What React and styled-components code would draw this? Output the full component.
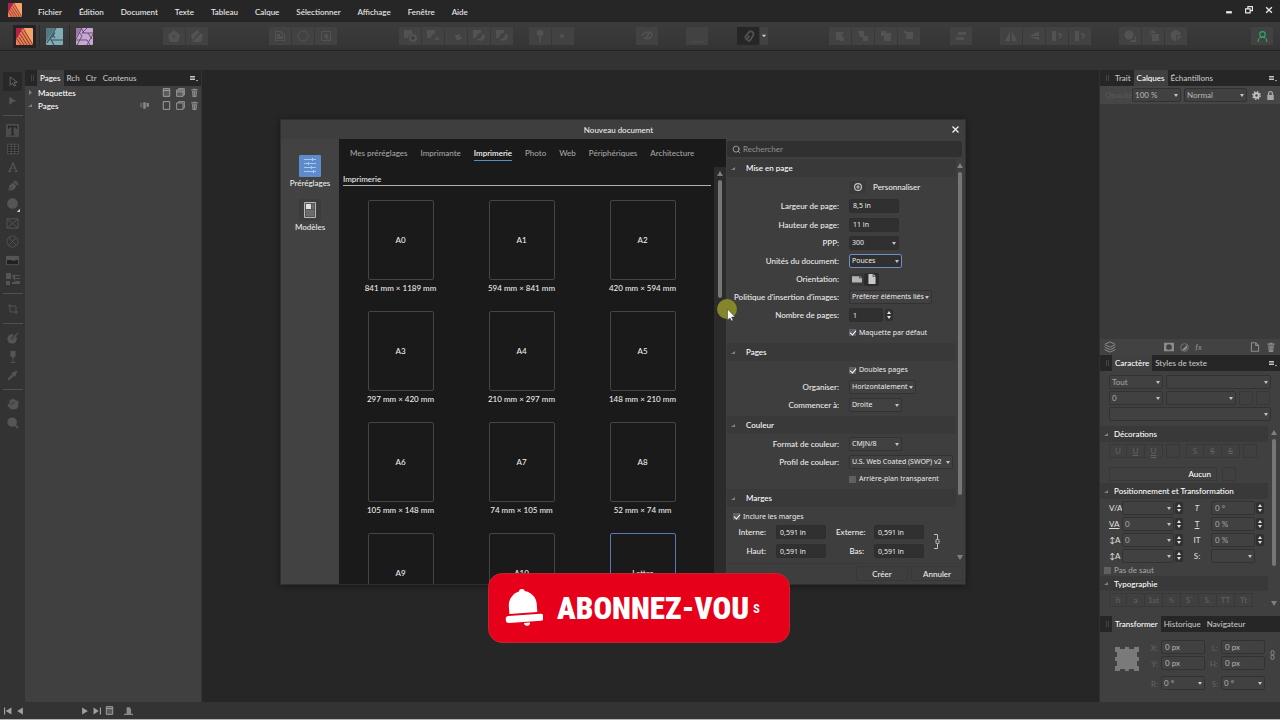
import React from 'react';
import styled, { createGlobalStyle, css } from 'styled-components';
import { Crop, Hand, Layers, Pipette, Search, UserRound } from 'lucide-react';

const GlobalStyle = createGlobalStyle`
  * {
    box-sizing: border-box;
  }

  body {
    margin: 0;
    background: #333333;
    color: #ececec;
    font-family: Lato, 'Open Sans', sans-serif;
    font-size: 8px;
    font-weight: 500;
    line-height: 12px;
    overflow: hidden;
  }

  button,
  input,
  select {
    margin: 0;
    padding: 0;
    border: 0;
    background: none;
    color: inherit;
    font: inherit;
  }

  a {
    color: inherit;
    text-decoration: none;
  }

  svg {
    display: block;
    flex-shrink: 0;
  }
`;

const Screen = styled.div`
  display: flex;
  flex-direction: column;
  min-height: 100vh;
  border-bottom: 1px solid #b4b4b4;
`;

const MenuBar = styled.header`
  display: flex;
  align-items: center;
  height: 22px;
  padding: 0 5px 2px 8px;
  background: #262626;
`;

const Menus = styled.nav`
  display: flex;
  flex: 1;
  gap: 17px;
  padding: 3px 0 0 16px;
`;

const WindowButtons = styled.div`
  display: flex;
  gap: 10px;

  button {
    width: 10px;
    height: 12px;
  }
`;

const Toolbar = styled.div`
  display: flex;
  align-items: center;
  height: 29px;
  padding: 0 7px 0 13px;
  background: linear-gradient(#3c3c3c, #343434);
  border-bottom: 1px solid #242424;
`;

const Persona = styled.button`
  display: flex;
  align-items: center;
  justify-content: center;
  width: 23px;
  height: 23px;
  background: ${props => (props.$active ? '#232323' : 'transparent')};
`;

const PersonaRule = styled.span`
  width: 1px;
  height: 22px;
  margin: 0 3px;
  background: #2a2a2a;
`;

const ToolGroup = styled.div`
  display: flex;
  gap: 1px;
  margin-left: ${props => props.$space};
`;

const ToolbarButton = styled.button`
  display: flex;
  align-items: center;
  justify-content: center;
  width: ${props => (props.$slim ? '8px' : '22px')};
  height: 18px;
  background: ${props => (props.$pressed ? '#262626' : '#424242')};
  color: ${props => props.$color || '#525252'};
`;

const ContextBar = styled.div`
  height: 19px;
`;

const Workspace = styled.div`
  display: flex;
  flex: 1;
`;

const ToolStrip = styled.div`
  display: flex;
  flex-direction: column;
  align-items: center;
  width: 25px;
  padding-top: 2px;
`;

const Tool = styled.button`
  display: flex;
  align-items: center;
  justify-content: center;
  width: 19px;
  height: ${props => (props.$short ? '18px' : '19px')};
  border-radius: 2px;
  background: ${props => (props.$active ? '#282828' : 'transparent')};
  color: #555555;
`;

const ToolRule = styled.hr`
  width: 20px;
  margin: 5px 0;
  border: 0;
  border-top: 1px solid #505050;
`;

const LeftDock = styled.aside`
  width: 177px;
  background: #404040;
  border-right: 1px solid #333333;
`;

const Canvas = styled.main`
  flex: 1;
  background: #262626;
`;

const RightDock = styled.aside`
  display: flex;
  flex-direction: column;
  width: 181px;
  border-left: 1px solid #303030;
  background: #404040;
`;

const TabBar = styled.div`
  display: flex;
  align-items: center;
  height: 16px;
  padding: 0 3px 0 6px;
  background: #262626;
`;

const Grip = styled.span`
  width: 3px;
  height: 6px;
  margin-right: 3px;
  border: solid #444444;
  border-width: 0 1px;
`;

const Tab = styled.button`
  height: 16px;
  padding: 0 ${props => (props.$tight ? '3px' : '4px')};
  background: ${props => (props.$active ? '#404040' : 'transparent')};
  color: ${props => (props.$active ? '#ffffff' : '#c4c4c4')};
`;

const PanelMenu = styled.button`
  display: flex;
  margin-left: auto;
`;

const TreeRow = styled.div`
  display: flex;
  align-items: center;
  gap: 5px;
  height: 13px;
  padding: 0 2px 0 3px;
  color: #ffffff;

  span {
    flex: 1;
  }
`;

const SpreadIcon = styled.i`
  margin-right: 8px;
  color: #858585;
`;

const Opacity = styled.div`
  display: flex;
  align-items: center;
  gap: 3px;
  height: 18px;
  padding: 0 5px;
  background: #464646;
  color: #b0b0b0;

  label {
    width: 24px;
    color: #595959;
  }

  svg:first-of-type {
    margin: 0 auto;
  }
`;

const LayerList = styled.div`
  flex: 1;
  background: #3a3a3a;
`;

const LayerActions = styled.div`
  display: flex;
  align-items: center;
  gap: 6px;
  height: 16px;
  padding: 0 4px;
  background: #424242;
  color: #8c8c8c;
`;

const Spacer = styled.span`
  flex: 1;
`;

const fieldSkin = css`
  border: 1px solid ${props => (props.$dark ? '#2e2e2e' : '#323232')};
  border-radius: 2px;
  background: ${props => (props.$dark ? '#303030' : '#414141')};
`;

const TextInput = styled.input`
  ${fieldSkin}
  width: ${props => props.$width || '100%'};
  height: 14px;
  padding: 0 3px;
`;

const SelectShell = styled.span`
  display: inline-flex;
  position: relative;
  width: ${props => props.$width || '100%'};

  select {
    ${fieldSkin}
    appearance: none;
    width: 100%;
    height: 14px;
    padding: 0 0 0 2px;
    outline: ${props => (props.$focus ? '1px solid #6c8fc4' : '0')};
    outline-offset: -1px;
  }

  &::after {
    content: '';
    position: absolute;
    top: 6px;
    right: 3px;
    border: 2px solid transparent;
    border-top: 3px solid #c4c4c4;
    pointer-events: none;
  }
`;

const Arrows = styled.button`
  width: 8px;
  height: 12px;
  background: #303030;
  border-radius: 2px;
`;

const Check = styled.label`
  display: flex;
  align-items: center;
  gap: 3px;

  input {
    appearance: none;
    position: relative;
    width: 7px;
    height: 7px;
    background: #606060;
  }

  input:checked::after {
    content: '';
    position: absolute;
    top: 0;
    left: 2px;
    width: 3px;
    height: 5px;
    border: solid #ffffff;
    border-width: 0 1px 1px 0;
    transform: rotate(40deg);
  }
`;

const CharacterPanel = styled.section`
  height: 245px;
  overflow: hidden;
  color: #a0a0a0;
`;

const FontRows = styled.div`
  display: flex;
  flex-direction: column;
  gap: 1px;
  padding: 3px 9px 5px;
`;

const FontRow = styled.div`
  display: flex;
  align-items: center;
  gap: 3px;
  height: 15px;
`;

const Split = styled.div`
  display: flex;
`;

const Grow = styled.div`
  flex: 1;
  min-width: 0;
`;

const Swatch = styled.button`
  width: 14px;
  height: 14px;
  flex-shrink: 0;
  border: 1px solid #383838;
`;

const Heading = styled.h2`
  display: flex;
  align-items: center;
  gap: ${props => props.$gap || '5px'};
  height: ${props => props.$height || '16px'};
  margin: 0;
  padding: 0 4px;
  background: #393939;
  color: #ffffff;
  font-size: 8px;
  font-weight: 500;
`;

const GlyphRow = styled.div`
  display: flex;
  align-items: center;
  gap: 3px;
  height: 18px;
  padding-left: 9px;
`;

const GlyphGroup = styled.div`
  display: flex;
  margin-right: ${props => (props.$apart ? '3px' : '0')};
`;

const Glyph = styled.button`
  width: 18px;
  height: 14px;
  border: 1px solid #383838;
  border-left-width: 0;
  color: #606060;
  text-decoration: ${props => props.$line || 'none'};

  &:first-child {
    border-left-width: 1px;
  }
`;

const DecorationRow = styled.div`
  display: flex;
  align-items: center;
  gap: 5px;
  height: 23px;
  padding: 5px 9px 0;
`;

const NoneButton = styled.button`
  width: 108px;
  height: 14px;
  padding-right: 5px;
  border: 1px solid #383838;
  color: #ffffff;
  text-align: right;
`;

const PositionRows = styled.div`
  padding: 1px 0 0 4px;
`;

const PositionRow = styled.div`
  display: grid;
  grid-template-columns: 12px 52px 8px 26px 44px 8px;
  align-items: center;
  column-gap: 1px;
  height: 16px;
  padding-left: 5px;
`;

const PositionLabel = styled.label`
  color: #dddddd;
  font-style: ${props => (props.$slanted ? 'italic' : 'normal')};
  text-align: ${props => (props.$centered ? 'center' : 'left')};
  text-decoration: ${props => (props.$underlined ? 'underline' : 'none')};
`;

const ScrollBar = styled.div`
  display: flex;
  flex-direction: column;
  align-items: center;
  width: ${props => props.$width || '12px'};
  padding: 4px 0 3px;
  gap: 4px;
  background: ${props => props.$track || 'transparent'};
`;

const Thumb = styled.div`
  flex: ${props => props.$size} 0 0;
  width: 4px;
  border-radius: 2px;
  background: #777777;
`;

const Rest = styled.div`
  flex: ${props => props.$size} 0 0;
`;

const TransformPanel = styled.section`
  display: flex;
  align-items: flex-start;
  height: 70px;
  padding: 8px 5px 0 15px;
  color: #aaaaaa;
`;

const TransformGrid = styled.div`
  display: grid;
  flex: 1;
  grid-template-columns: 19px 44px 10px 44px;
  grid-template-rows: 14px 14px 18px;
  gap: 2px 3px;
  align-items: end;

  label {
    color: #606060;
    text-align: right;
  }
`;

const StatusBar = styled.footer`
  display: flex;
  align-items: center;
  height: 17px;
  padding-left: 4px;
  gap: 4px;
  color: #a0a0a0;
`;

const StatusGap = styled.span`
  width: ${props => props.$width};
`;

const Dialog = styled.section`
  position: absolute;
  top: 119px;
  left: 280px;
  display: flex;
  flex-direction: column;
  width: 686px;
  height: 466px;
  background: #3e3e3e;
  border: 1px solid #303030;
  box-shadow: 0 1px 6px rgba(0, 0, 0, 0.4);
`;

const DialogTitle = styled.div`
  display: flex;
  align-items: center;
  height: 19px;
  padding: 0 6px 0 4px;

  h1 {
    flex: 1;
    margin: 0;
    font-size: 8px;
    font-weight: 500;
    text-align: center;
  }
`;

const DialogBody = styled.div`
  display: flex;
  flex: 1;
  min-height: 0;
`;

const Sources = styled.nav`
  display: flex;
  flex-direction: column;
  align-items: center;
  gap: 10px;
  width: 58px;
  padding-top: 16px;
  background: #424242;
`;

const Source = styled.button`
  display: flex;
  flex-direction: column;
  align-items: center;
`;

const Presets = styled.div`
  display: flex;
  flex: 1;
  flex-direction: column;
  background: #1a1a1a;
`;

const Categories = styled.nav`
  display: flex;
  gap: 13px;
  height: 28px;
  padding: 8px 11px 0;
`;

const Category = styled.a`
  height: 14px;
  color: ${props => (props.$active ? '#ffffff' : '#a4a4a4')};
  border-bottom: ${props => (props.$active ? '1px solid #5c88cc' : '0')};
  white-space: nowrap;
`;

const PresetScroll = styled.div`
  display: flex;
  flex: 1;
  min-height: 0;
`;

const PresetList = styled.div`
  flex: 1;
  overflow: hidden;

  h2 {
    margin: 6px 3px 14px 4px;
    border-bottom: 1px solid #b0b0b0;
    font-size: 8px;
    font-weight: 500;
    line-height: 12px;
  }
`;

const PresetGrid = styled.div`
  display: grid;
  grid-template-columns: repeat(3, 1fr);
  grid-auto-rows: 111px;
  padding: 0 11px 0 1px;
`;

const Preset = styled.button`
  display: flex;
  flex-direction: column;
  align-items: center;
  gap: 2px;
`;

const Sheet = styled.span`
  display: flex;
  align-items: center;
  justify-content: center;
  width: 66px;
  height: 80px;
  border: 1px solid ${props => (props.$selected ? '#5879b4' : '#454545')};
  border-radius: 2px;
`;

const Options = styled.div`
  display: flex;
  flex-direction: column;
  width: 239px;
  padding: 2px 1px;
`;

const SearchBox = styled.label`
  display: flex;
  align-items: center;
  gap: 2px;
  height: 16px;
  margin-right: 2px;
  padding: 0 5px;
  background: #303030;
  border-radius: 2px;
  color: #b8b8b8;

  input {
    flex: 1;
    outline: 0;
  }

  input::placeholder {
    color: #8a8a8a;
    opacity: 1;
  }
`;

const OptionsScroll = styled.div`
  display: flex;
  flex: 1;
  min-height: 0;
  padding-top: 2px;
  overflow: hidden;
`;

const Fields = styled.div`
  display: flex;
  flex-direction: column;
  padding: 1px 0 2px;

  input,
  select,
  ${Check} {
    font-family: 'Noto Sans', sans-serif;
    font-size: 7px;
    font-weight: 400;
  }
`;

const FieldRow = styled.div`
  display: grid;
  grid-template-columns: 112px 1fr;
  align-items: center;
  column-gap: 10px;
  height: ${props => props.$height || '18px'};

  > label:first-child,
  > span:first-child {
    white-space: nowrap;
    justify-self: end;
  }
`;

const Inline = styled.div`
  display: flex;
  align-items: center;
  gap: ${props => props.$gap || '2px'};
`;

const SmallButton = styled.button`
  display: flex;
  align-items: center;
  justify-content: center;
  width: ${props => props.$width || '15px'};
  height: 13px;
  border-radius: 2px;
  background: ${props => (props.$active ? '#2c2c2c' : '#393939')};
`;

const MarginsToggle = styled.div`
  display: flex;
  height: 17px;
  padding-left: 6px;
`;

const Margins = styled.div`
  display: grid;
  grid-template-columns: 35px 50px 28px 50px 10px;
  align-items: center;
  gap: 5px 10px;
  padding-left: 4px;

  label {
    text-align: right;
  }
`;

const LinkedMargins = styled.span`
  grid-row: 1 / 3;
  grid-column: 5;
`;

const DialogFooter = styled.div`
  display: flex;
  justify-content: flex-end;
  gap: 3px;
  padding: 2px 1px 1px 0;
  border-top: 1px solid #393939;

  button {
    width: 52px;
    height: 15px;
    border: 1px solid #383838;
    border-radius: 2px;
  }
`;

const Banner = styled.a`
  position: absolute;
  bottom: 77px;
  left: 50%;
  display: flex;
  align-items: center;
  width: 302px;
  height: 70px;
  margin-left: -152px;
  padding-left: 16px;
  border: 1px solid #c22630;
  border-radius: 14px;
  background: #e60019;
  color: #ffffff;
  font-family: 'Liberation Sans Narrow', 'Roboto Condensed', sans-serif;
  font-size: 31px;
  font-weight: 700;
  line-height: 36px;

  strong {
    margin: 2px 4px 0 14px;
  }

  small {
    padding-top: 2px;
    font-size: 12px;
    line-height: 16px;
  }
`;

const Pointer = styled.svg`
  position: absolute;
  top: 299px;
  left: 717px;
  pointer-events: none;
`;

const Icon = ({ size = 14, children, ...rest }) => (
  <svg
    width={size}
    height={size}
    viewBox="0 0 14 14"
    fill="currentColor"
    aria-hidden="true"
    {...rest}
  >
    {children}
  </svg>
);

const PublisherLogo = ({ size = 17 }) => (
  <svg width={size} height={size} viewBox="0 0 17 17">
    <rect width="17" height="17" rx="1" fill="#f4a468" />
    <path d="M7 0L0 12v5h17z" fill="#ee7f50" />
    <path d="M0 0h7L0 12z" fill="#b51f4b" />
    <path
      d="M7 0l10 17M5.500 3L14 17M4 6l7 11M2.500 8.500L8 17M1 11l4 6"
      stroke="#6b2a2c"
      strokeWidth="0.800"
    />
  </svg>
);

const DesignerLogo = () => (
  <svg width="17" height="17" viewBox="0 0 17 17">
    <rect width="17" height="17" rx="1" fill="#82adb7" />
    <path d="M0 0h9L0 14z" fill="#547985" />
    <path
      d="M10 0L1 15M4 10l4 7M5 12h12M5.500 10L9 4.500M9 10L7 7"
      stroke="#35535c"
      strokeWidth="1.100"
      fill="none"
    />
  </svg>
);

const PhotoLogo = () => (
  <svg width="17" height="17" viewBox="0 0 17 17">
    <rect width="17" height="17" rx="1" fill="#c8a8d3" />
    <path d="M0 0h6L0 9z" fill="#957aa8" />
    <path
      d="M5 0l3 5M0 11L6 0M6 5h11M12 5l4 6M17 6l-6 11M11 12l3 5M0 12h11M1 17L6 8l-3-4M6 5l5-5"
      stroke="#665070"
      strokeWidth="1"
      fill="none"
    />
  </svg>
);

const Trash = ({ size = 9 }) => (
  <Icon size={size} fill="#8e8e8e">
    <path d="M2 2h3V1h4v1h3v2H2zM3 5h8l-1 9H4z" />
    <path d="M5.500 6v6M8.500 6v6" stroke="#505050" />
  </Icon>
);

const BlankPage = ({ filled }) => (
  <Icon size={9} fill={filled ? '#5a5a5a' : 'none'} stroke="#a0a0a0" strokeWidth="1.500">
    <path d="M2 1h10v12H2z" />
    {filled && <path d="M2 4h10" />}
  </Icon>
);

const PageStack = ({ filled }) => (
  <Icon size={9} fill={filled ? '#5a5a5a' : 'none'} stroke="#a0a0a0" strokeWidth="1.400">
    <path d="M4 3V1h9v10h-2M1 3h10v10H1z" />
    {filled && <path d="M1 6h10" />}
  </Icon>
);

const Gear = () => (
  <Icon size={9} fill="none" stroke="#c4c4c4">
    <circle cx="7" cy="7" r="3.500" strokeWidth="3" />
    <circle cx="7" cy="7" r="5.800" strokeWidth="2.200" strokeDasharray="2.300 2.255" />
  </Icon>
);

const Padlock = () => (
  <Icon size={9} fill="#a8a8a8">
    <path d="M2 6h10v8H2z" />
    <path d="M4 7V4a3 3 0 016 0v3" fill="none" stroke="#a8a8a8" strokeWidth="2" />
  </Icon>
);

const Disclosure = ({ open }) => (
  <svg width="5" height="5" viewBox="0 0 5 5" fill="#808080">
    <path d={open ? 'M4 1v3H0z' : 'M1 0l3 2.500L1 5z'} />
  </svg>
);

const MenuIcon = () => (
  <svg width="8" height="7" viewBox="0 0 8 7">
    <path d="M0 1.500h5M0 3h5M0 4.500h5" stroke="#c4c4c4" strokeWidth="1.200" />
    <path d="M6 5h2L7 6.500z" fill="#d0d0d0" />
  </svg>
);

const UpDown = ({ label }) => (
  <Arrows aria-label={label}>
    <svg width="8" height="12" viewBox="0 0 8 12" fill="#e0e0e0">
      <path d="M2 5h4L4 2zM2 7h4l-2 3z" />
    </svg>
  </Arrows>
);

const Triangle = ({ down }) => (
  <svg width="6" height="5" viewBox="0 0 6 5" fill="#808080">
    <path d={down ? 'M0 0h6L3 5z' : 'M0 5h6L3 0z'} />
  </svg>
);

const MarginLink = () => (
  <svg width="6" height="17" viewBox="0 0 6 17" fill="none" stroke="#c0c0c0">
    <path d="M0 1.500h3.500V6M3.500 11v4.500H0" />
    <path d="M2 9V6.500h3V9M2 8v2.500h3V8" strokeWidth="0.800" />
  </svg>
);

const Chain = () => (
  <svg width="5" height="30" viewBox="0 0 5 30" fill="none" stroke="#8a8a8a">
    <rect x="1" y="10.500" width="3" height="4.500" rx="1.500" />
    <rect x="1" y="15" width="3" height="4.500" rx="1.500" />
  </svg>
);

const Select = ({ label, value, width, dark, focus, id }) => (
  <SelectShell $width={width} $dark={dark} $focus={focus}>
    <select id={id} aria-label={id ? undefined : label} defaultValue={value}>
      <option>{value}</option>
    </select>
  </SelectShell>
);

// Greyed toolbar glyphs, drawn on a 14px grid
const glyphs = {
  pentagon: (
    <>
      <path d="M7 1l6 5-2 7H3L1 6z" />
      <path d="M7 5v5M5 7.500h4" stroke="#444444" />
    </>
  ),
  cutPentagon: (
    <>
      <path d="M7 1l6 5-2 7H3L1 6z" />
      <path d="M12 2L3 11" stroke="#424242" strokeWidth="1.500" />
    </>
  ),
  doc: <path d="M2 2h6l4 4v6H2zM3 3v8h8V7L7 3zM4 5h3v2h3v3H4z" fillRule="evenodd" />,
  ring: <circle cx="7" cy="7" r="5" fill="none" stroke="currentColor" />,
  frame: <path d="M2 2h10v10H2zM3 3v8h8V3zM5 5h4v4l2 2-5-2z" fillRule="evenodd" />,
  add: (
    <>
      <path d="M1 1h8v4a4 4 0 00-4 4H1z" />
      <circle cx="10" cy="9" r="4" />
      <path d="M10 7v4M8 9h4" stroke="#333333" />
    </>
  ),
  subtract: <path d="M1 1h8v4a4 4 0 00-4 4H1zM10 8a3 3 0 013 3H9z" />,
  intersect: <path d="M6 6h3l2-2v7H7zM10 8h3v2h-3z" />,
  overlap: (
    <>
      <path d="M1 1h8v3a5 5 0 00-5 5H1z" />
      <path d="M12 5a4 4 0 11-7 5l4-1 1-3z" />
    </>
  ),
  pin: <path d="M7 1a3 3 0 011 6v6H6.500V7A3 3 0 017 1z" />,
  dot: <circle cx="6" cy="7" r="2" />,
  eye: (
    <path
      d="M2 7c2-5 9-5 10-1-1 4-6 5-8 2M6 9l3-5M8 4v4"
      fill="none"
      stroke="currentColor"
      strokeWidth="1.500"
    />
  ),
  line: <path d="M1 13h12" stroke="#4e4e4e" />,
  toFront: <path d="M3 3h6L7 5l4 4v3H7L4 9 3 10zM9 3h2L5 11H3z" />,
  forward: <path d="M2 2h6v5h4v5H7V8H4z" />,
  backward: <path d="M2 2h5v2h5v8H5V7H2z" />,
  toBack: <path d="M4 3h7v7H4zM2 2h2v2H2z" />,
  align: <path d="M4 3h8v3H4zM2 8h8v3H2z" />,
  flipH: <path d="M6 2v10H1zM8 2l5 10H8z" />,
  flipV: <path d="M12 2v5H2zM2 8h10v3z" />,
  rotate: <path d="M2 2h4v10H2zM8 4h3l1 2-2 4-1-1 1-3H8z" />,
  circleBack: (
    <>
      <circle cx="6" cy="6" r="4.500" />
      <path d="M8 11h4V7h1v6H8z" />
    </>
  ),
  circleMid: <path d="M6 1a5 5 0 014 3H5v4A5 5 0 016 1zM6 5h7v7H6z" />,
  circlePie: <path d="M7 1a6 6 0 015 5H7v6A5.500 5.500 0 017 1zM8 7h5L8 12z" />,
};

const toolbarGroups = [
  { space: '67px', icons: ['pentagon', 'cutPentagon'] },
  { space: '61px', icons: ['doc', 'ring', 'frame'] },
  { space: '62px', icons: ['add', 'subtract', 'intersect', 'overlap', 'overlap'] },
  { space: '16px', icons: ['pin', 'dot'] },
  { space: '62px', icons: ['eye'] },
  { space: '28px', icons: ['line'] },
];

const arrangeGroups = [
  { space: '61px', icons: ['toFront', 'forward', 'backward', 'toBack'] },
  { space: '30px', icons: ['align'] },
  { space: '28px', icons: ['flipH', 'flipV', 'rotate', 'rotate'] },
  { space: '28px', icons: ['circleBack', 'circleMid', 'circlePie'] },
];

const menus = [
  'Fichier',
  'Édition',
  'Document',
  'Texte',
  'Tableau',
  'Calque',
  'Sélectionner',
  'Affichage',
  'Fenêtre',
  'Aide',
];

const categories = [
  'Mes préréglages',
  'Imprimante',
  'Imprimerie',
  'Photo',
  'Web',
  'Périphériques',
  'Architecture',
];

const presets = [
  ['A0', '841 mm × 1189 mm'],
  ['A1', '594 mm × 841 mm'],
  ['A2', '420 mm × 594 mm'],
  ['A3', '297 mm × 420 mm'],
  ['A4', '210 mm × 297 mm'],
  ['A5', '148 mm × 210 mm'],
  ['A6', '105 mm × 148 mm'],
  ['A7', '74 mm × 105 mm'],
  ['A8', '52 mm × 74 mm'],
  ['A9'],
  ['A10'],
  ['Letter'],
];

const ToolbarGroups = ({ groups }) =>
  groups.map((group, i) => (
    <ToolGroup key={i} $space={group.space}>
      {group.icons.map((name, j) => (
        <ToolbarButton key={j} aria-label={name}>
          <Icon>{glyphs[name]}</Icon>
        </ToolbarButton>
      ))}
    </ToolGroup>
  ));

const Tools = () => (
  <ToolStrip>
    <Tool $active aria-label="Déplacer">
      <Icon size={11} fill="none" stroke="#707070">
        <path d="M4 1v11l3-3 2 4 2-1-2-4h4z" />
      </Icon>
    </Tool>
    <Tool aria-label="Noeud">
      <Icon size={9}>
        <path d="M2 1l11 7-5 1-6 5z" />
      </Icon>
    </Tool>
    <ToolRule />
    <Tool $short aria-label="Texte">
      <Icon size={13}>
        <path d="M0 0h14v14H0z" fill="#4c4c4c" />
        <path d="M2 2h10v3h-1L10 3.500H8V11l2 1H4l2-1V3.500H4L3 5H2z" fill="#262626" />
      </Icon>
    </Tool>
    <Tool aria-label="Tableau">
      <Icon size={12} fill="none" stroke="currentColor">
        <path d="M.500 1.500h13v11H.500z" fill="#222222" />
        <path d="M1 4h12M1 7h12M1 10h12M5 1v12M9 1v12" />
      </Icon>
    </Tool>
    <Tool $short aria-label="Texte artistique">
      <Icon size={10}>
        <path d="M6.500 0h1L13 13h1v1H9v-1h2l-1.500-4H4.500L3 13h2v1H0v-1h1zM6.500 3L5 8h4z" />
      </Icon>
    </Tool>
    <Tool aria-label="Plume">
      <Icon size={12}>
        <path d="M1 13l2-7 4-3 4 4-3 4z" />
        <path d="M1 13l5-5" stroke="#333333" />
        <path d="M8 2l1-1 4 4-1 1zM11 1l2 2" stroke="currentColor" />
      </Icon>
    </Tool>
    <Tool aria-label="Ellipse">
      <Icon size={15}>
        <circle cx="7" cy="6" r="5" />
        <path d="M14 11v3h-3z" fill="#cccccc" />
      </Icon>
    </Tool>
    <Tool $short aria-label="Cadre d’image">
      <Icon size={13} fill="none" stroke="currentColor">
        <path d="M1 2h12v10H1zM1 2l12 10M13 2L1 12" />
      </Icon>
    </Tool>
    <Tool aria-label="Cadre elliptique">
      <Icon size={13} fill="none" stroke="currentColor">
        <circle cx="7" cy="7" r="6" />
        <path d="M3 3l8 8M11 3l-8 8" />
      </Icon>
    </Tool>
    <Tool aria-label="Placer une image">
      <Icon size={13}>
        <path d="M0 2h14v10H0z" />
        <path d="M1 7c3-2 6 2 12-1v5H1z" fill="#202020" />
      </Icon>
    </Tool>
    <Tool $short aria-label="Fusion de données">
      <Icon size={14}>
        <path d="M0 1h5v6H0zM0 9h4v4H0zM6 3h8v1H9v2h5v1H9v2h5v3H6v-2h3z" />
      </Icon>
    </Tool>
    <ToolRule />
    <Tool aria-label="Rogner">
      <Crop size={12} />
    </Tool>
    <ToolRule />
    <Tool $short aria-label="Remplissage">
      <Icon size={12}>
        <circle cx="6" cy="8" r="5.500" />
        <path d="M5 9l7-8" stroke="#333333" strokeWidth="3" />
        <path d="M5 9l8-8" stroke="currentColor" strokeWidth="1.500" />
      </Icon>
    </Tool>
    <Tool aria-label="Transparence">
      <Icon size={12}>
        <path d="M4 0h6v6L8 8h-.500v5H10v1H4v-1h2.500V8H6L4 6z" />
      </Icon>
    </Tool>
    <Tool $short aria-label="Pipette">
      <Pipette size={11} fill="#555555" strokeWidth={1.5} />
    </Tool>
    <ToolRule />
    <Tool $short aria-label="Panoramique">
      <Hand size={12} fill="#555555" />
    </Tool>
    <Tool aria-label="Zoom">
      <Icon size={12}>
        <circle cx="6" cy="6" r="5.500" />
        <path d="M9 9l4 4" stroke="currentColor" strokeWidth="2" />
      </Icon>
    </Tool>
  </ToolStrip>
);

const PagesDock = () => (
  <LeftDock>
    <TabBar>
      <Grip />
      <Tab $active $tight>
        Pages
      </Tab>
      <Tab $tight>Rch</Tab>
      <Tab $tight>Ctr</Tab>
      <Tab $tight>Contenus</Tab>
      <PanelMenu aria-label="Préférences du panneau">
        <MenuIcon />
      </PanelMenu>
    </TabBar>
    <TreeRow>
      <Disclosure />
      <span>Maquettes</span>
      <BlankPage filled />
      <PageStack filled />
      <Trash />
    </TreeRow>
    <TreeRow>
      <Disclosure open />
      <span>Pages</span>
      <SpreadIcon>
        <Icon size={9}>
          <path d="M0 3h4v7H0z" fill="#606060" />
          <path d="M5 2h4v10H5zM10 3h4v6h-4z" />
        </Icon>
      </SpreadIcon>
      <BlankPage />
      <PageStack />
      <Trash />
    </TreeRow>
  </LeftDock>
);

const positions = [
  { left: 'V/A', value: '', right: 'T', slanted: true, rightValue: '0 °' },
  { left: 'VA', value: '0', right: 'T', underlined: true, rightValue: '0 %' },
  { left: '↕A', value: '0', right: 'IT', rightValue: '0 %' },
];

const Character = () => (
  <>
    <TabBar>
      <Grip />
      <Tab $active $tight>
        Caractère
      </Tab>
      <Tab $tight>Styles de texte</Tab>
      <PanelMenu aria-label="Préférences du panneau">
        <MenuIcon />
      </PanelMenu>
    </TabBar>
    <CharacterPanel>
      <FontRows>
        <FontRow>
          <Select label="Collection" value="Tout" width="54px" />
          <Select label="Police" value="" width="105px" />
        </FontRow>
        <FontRow>
          <Select label="Taille" value="0" width="54px" />
          <Select label="Style" value="" width="70px" />
          <Swatch aria-label="Couleur" />
          <Swatch aria-label="Fond" />
        </FontRow>
        <FontRow>
          <Select label="Style de caractère" value="" />
        </FontRow>
      </FontRows>
      <Split>
        <Grow>
          <Heading>
            <Disclosure open />
            Décorations
          </Heading>
          <GlyphRow>
            <GlyphGroup>
              <Glyph>U</Glyph>
              <Glyph $line="underline">U</Glyph>
              <Glyph $line="underline double">U</Glyph>
            </GlyphGroup>
            <GlyphGroup $apart>
              <Swatch aria-label="Couleur de soulignement" />
            </GlyphGroup>
            <GlyphGroup>
              <Glyph>S</Glyph>
              <Glyph $line="line-through">S</Glyph>
              <Glyph $line="line-through double">S</Glyph>
            </GlyphGroup>
            <Swatch aria-label="Couleur barré" />
          </GlyphRow>
          <DecorationRow>
            <NoneButton>Aucun</NoneButton>
            <Swatch aria-label="Contour" />
          </DecorationRow>
          <Heading>
            <Disclosure open />
            Positionnement et Transformation
          </Heading>
          <PositionRows>
            {positions.map((row, i) => (
              <PositionRow key={i}>
                <PositionLabel htmlFor={`left-${i}`} $underlined={i === 1}>
                  {row.left}
                </PositionLabel>
                <Select id={`left-${i}`} value={row.value} />
                <UpDown label="Ajuster" />
                <PositionLabel
                  htmlFor={`right-${i}`}
                  $centered
                  $slanted={row.slanted}
                  $underlined={row.underlined}
                >
                  {row.right}
                </PositionLabel>
                <TextInput id={`right-${i}`} defaultValue={row.rightValue} />
                <UpDown label="Ajuster" />
              </PositionRow>
            ))}
            <PositionRow>
              <PositionLabel htmlFor="leading">↕A</PositionLabel>
              <Select id="leading" value="" />
              <UpDown label="Ajuster" />
              <PositionLabel htmlFor="script" $centered>
                S:
              </PositionLabel>
              <Select id="script" value="" />
            </PositionRow>
            <Check>
              <input type="checkbox" />
              Pas de saut
            </Check>
          </PositionRows>
          <Heading $height="15px">
            <Disclosure open />
            Typographie
          </Heading>
          <GlyphRow>
            <GlyphGroup>
              {['fi', 'a', '1st', '½', 'S˙', 'S.', 'TT', 'Tt'].map(text => (
                <Glyph key={text}>{text}</Glyph>
              ))}
            </GlyphGroup>
          </GlyphRow>
        </Grow>
        <ScrollBar>
          <Triangle />
          <Thumb $size={133} />
          <Rest $size={28} />
          <Triangle down />
        </ScrollBar>
      </Split>
    </CharacterPanel>
  </>
);

const Transform = () => (
  <>
    <TabBar>
      <Grip />
      <Tab $active $tight>
        Transformer
      </Tab>
      <Tab $tight>Historique</Tab>
      <Tab $tight>Navigateur</Tab>
    </TabBar>
    <TransformPanel>
      <svg width="24" height="38" viewBox="0 0 24 38" fill="#7a7a7a">
        <path d="M2 9h20v20H2zM0 7h5v5H0zM10 7h4v4h-4zM19 7h5v5h-5zM0 17h4v4H0zM20 17h4v4h-4zM0 26h5v5H0zM10 27h4v4h-4zM19 26h5v5h-5z" />
      </svg>
      <TransformGrid>
        <label htmlFor="tx">X:</label>
        <TextInput id="tx" defaultValue="0 px" />
        <label htmlFor="tl">L:</label>
        <TextInput id="tl" defaultValue="0 px" />
        <label htmlFor="ty">Y:</label>
        <TextInput id="ty" defaultValue="0 px" />
        <label htmlFor="th">H:</label>
        <TextInput id="th" defaultValue="0 px" />
        <label htmlFor="tr">R:</label>
        <Select id="tr" value="0 °" />
        <label htmlFor="ts">S:</label>
        <Select id="ts" value="0 °" />
      </TransformGrid>
      <Chain />
    </TransformPanel>
  </>
);

const Section = ({ title, children }) => (
  <section>
    <Heading $height="18px" $gap="10px">
      <Disclosure open />
      {title}
    </Heading>
    {children}
  </section>
);

const NewDocument = () => (
  <Dialog role="dialog" aria-labelledby="dialog-title">
    <DialogTitle>
      <h1 id="dialog-title">Nouveau document</h1>
      <button aria-label="Fermer">
        <Icon size={7} stroke="#f0f0f0" strokeWidth="2.500">
          <path d="M1 1l12 12M13 1L1 13" />
        </Icon>
      </button>
    </DialogTitle>
    <DialogBody>
      <Sources>
        <Source>
          <svg width="22" height="22" viewBox="0 0 22 22">
            <rect width="22" height="22" rx="1" fill="#5e8bcb" />
            <path
              d="M5 4.500h12M5 8.500h12M5 12.500h12M5 16.500h12M13.500 3v3M9.500 7v3M12.500 11v3M14.500 15v3"
              stroke="#a9c6ee"
            />
          </svg>
          Préréglages
        </Source>
        <Source>
          <svg width="22" height="22" viewBox="0 0 22 22">
            <rect width="22" height="22" fill="#3c3c3c" />
            <path d="M5.500 3.500h11v15h-11z" fill="#555555" stroke="#b8b8b8" />
            <path d="M7 5h5v5H7z" fill="#e0e0e0" />
            <path d="M13 5h2v5h-2zM7 11h8v6H7z" fill="#6c6c6c" />
          </svg>
          Modèles
        </Source>
      </Sources>
      <Presets>
        <Categories>
          {categories.map(name => (
            <Category key={name} href="#" $active={name === 'Imprimerie'}>
              {name}
            </Category>
          ))}
        </Categories>
        <PresetScroll>
          <PresetList>
            <h2>Imprimerie</h2>
            <PresetGrid>
              {presets.map(([name, size]) => (
                <Preset key={name}>
                  <Sheet $selected={name === 'Letter'}>{name}</Sheet>
                  {size}
                </Preset>
              ))}
            </PresetGrid>
          </PresetList>
          <ScrollBar $track="#2b2b2b">
            <Triangle />
            <Thumb $size={120} />
            <Rest $size={284} />
          </ScrollBar>
        </PresetScroll>
      </Presets>
      <Options>
        <SearchBox>
          <Search size={9} />
          <input type="search" placeholder="Rechercher" aria-label="Rechercher" />
        </SearchBox>
        <OptionsScroll>
          <Grow>
            <Section title="Mise en page">
              <Fields>
                <FieldRow>
                  <span />
                  <Inline $gap="7px">
                    <SmallButton aria-label="Ajouter" $width="17px">
                      <Icon size={8} fill="none" stroke="#c8c8c8" strokeWidth="2">
                        <circle cx="7" cy="7" r="6" />
                        <path d="M7 4v6M4 7h6" />
                      </Icon>
                    </SmallButton>
                    Personnaliser
                  </Inline>
                </FieldRow>
                <FieldRow $height="19px">
                  <label htmlFor="page-width">Largeur de page:</label>
                  <TextInput id="page-width" $dark $width="50px" defaultValue="8,5 in" />
                </FieldRow>
                <FieldRow $height="19px">
                  <label htmlFor="page-height">Hauteur de page:</label>
                  <TextInput id="page-height" $dark $width="50px" defaultValue="11 in" />
                </FieldRow>
                <FieldRow>
                  <label htmlFor="dpi">PPP:</label>
                  <Select id="dpi" dark width="50px" value="300" />
                </FieldRow>
                <FieldRow>
                  <label htmlFor="units">Unités du document:</label>
                  <Select id="units" focus dark width="53px" value="Pouces" />
                </FieldRow>
                <FieldRow>
                  <span>Orientation:</span>
                  <Inline $gap="0">
                    <SmallButton aria-label="Paysage">
                      <Icon size={10} fill="#b4b4b4">
                        <path d="M0 3h10v3h4v6H0zM11 3l3 2h-3z" />
                      </Icon>
                    </SmallButton>
                    <SmallButton aria-label="Portrait" $active>
                      <Icon size={10} fill="#c8c8c8">
                        <path d="M2 0h6v4h4v10H2zM9 0l3 3H9z" />
                      </Icon>
                    </SmallButton>
                  </Inline>
                </FieldRow>
                <FieldRow>
                  <label htmlFor="placement">Politique d'insertion d'images:</label>
                  <Select id="placement" width="83px" value="Préférer éléments liés" />
                </FieldRow>
                <FieldRow>
                  <label htmlFor="page-count">Nombre de pages:</label>
                  <Inline>
                    <TextInput id="page-count" $dark $width="34px" defaultValue="1" />
                    <UpDown label="Nombre de pages" />
                  </Inline>
                </FieldRow>
                <FieldRow $height="17px">
                  <span />
                  <Check>
                    <input type="checkbox" defaultChecked />
                    Maquette par défaut
                  </Check>
                </FieldRow>
              </Fields>
            </Section>
            <Section title="Pages">
              <Fields>
                <FieldRow $height="16px">
                  <span />
                  <Check>
                    <input type="checkbox" defaultChecked />
                    Doubles pages
                  </Check>
                </FieldRow>
                <FieldRow>
                  <label htmlFor="arrange">Organiser:</label>
                  <Select id="arrange" width="67px" value="Horizontalement" />
                </FieldRow>
                <FieldRow>
                  <label htmlFor="start">Commencer à:</label>
                  <Select id="start" width="53px" value="Droite" />
                </FieldRow>
              </Fields>
            </Section>
            <Section title="Couleur">
              <Fields>
                <FieldRow>
                  <label htmlFor="format">Format de couleur:</label>
                  <Select id="format" width="53px" value="CMJN/8" />
                </FieldRow>
                <FieldRow>
                  <label htmlFor="profile">Profil de couleur:</label>
                  <Select id="profile" width="104px" value="U.S. Web Coated (SWOP) v2" />
                </FieldRow>
                <FieldRow $height="16px">
                  <span />
                  <Check>
                    <input type="checkbox" />
                    Arrière-plan transparent
                  </Check>
                </FieldRow>
              </Fields>
            </Section>
            <Section title="Marges">
              <Fields>
                <MarginsToggle>
                  <Check>
                    <input type="checkbox" defaultChecked />
                    Inclure les marges
                  </Check>
                </MarginsToggle>
                <Margins>
                  <label htmlFor="inner">Interne:</label>
                  <TextInput id="inner" $dark defaultValue="0,591 in" />
                  <label htmlFor="outer">Externe:</label>
                  <TextInput id="outer" $dark defaultValue="0,591 in" />
                  <LinkedMargins>
                    <MarginLink />
                  </LinkedMargins>
                  <label htmlFor="top">Haut:</label>
                  <TextInput id="top" $dark defaultValue="0,591 in" />
                  <label htmlFor="bottom">Bas:</label>
                  <TextInput id="bottom" $dark defaultValue="0,591 in" />
                </Margins>
              </Fields>
            </Section>
          </Grow>
          <ScrollBar $width="8px">
            <Triangle />
            <Thumb $size={325} />
            <Rest $size={52} />
            <Triangle down />
          </ScrollBar>
        </OptionsScroll>
        <DialogFooter>
          <button>Créer</button>
          <button>Annuler</button>
        </DialogFooter>
      </Options>
    </DialogBody>
  </Dialog>
);

const App = () => (
  <>
    <GlobalStyle />
    <Screen>
      <MenuBar>
        <PublisherLogo size={14} />
        <Menus>
          {menus.map(menu => (
            <a key={menu} href="#">
              {menu}
            </a>
          ))}
        </Menus>
        <WindowButtons>
          <button aria-label="Réduire">
            <Icon size={8}>
              <path d="M2 9h10v4H2z" />
            </Icon>
          </button>
          <button aria-label="Restaurer">
            <Icon size={8} fill="none" stroke="#e8e8e8" strokeWidth="2">
              <path d="M5 4V1h8v7h-3M1 5h8v7H1z" />
            </Icon>
          </button>
          <button aria-label="Fermer">
            <Icon size={8} stroke="#e8e8e8" strokeWidth="2.500">
              <path d="M2 2l10 10M12 2L2 12" />
            </Icon>
          </button>
        </WindowButtons>
      </MenuBar>
      <Toolbar>
        <Persona $active aria-label="Publisher">
          <PublisherLogo />
        </Persona>
        <PersonaRule />
        <Persona aria-label="Designer">
          <DesignerLogo />
        </Persona>
        <PersonaRule />
        <Persona aria-label="Photo">
          <PhotoLogo />
        </Persona>
        <ToolbarGroups groups={toolbarGroups} />
        <ToolGroup $space="29px">
          <ToolbarButton $pressed aria-label="Magnétisme">
            <Icon size={13} fill="none" stroke="currentColor" strokeWidth="2">
              <path d="M3 8l4-5a2.500 2.500 0 015 3l-4 6M3 8l2 2 3-4M8 12l-2-1" />
            </Icon>
          </ToolbarButton>
          <ToolbarButton $slim $color="#cccccc" aria-label="Options de magnétisme">
            <Icon size={6}>
              <path d="M2 4h10L7 10z" />
            </Icon>
          </ToolbarButton>
        </ToolGroup>
        <ToolbarGroups groups={arrangeGroups} />
        <Spacer />
        <ToolbarButton $color="#2fae6c" aria-label="Compte">
          <UserRound size={13} />
        </ToolbarButton>
      </Toolbar>
      <ContextBar />
      <Workspace>
        <Tools />
        <PagesDock />
        <Canvas />
        <RightDock>
          <TabBar>
            <Grip />
            <Tab $tight>Trait</Tab>
            <Tab $active $tight>
              Calques
            </Tab>
            <Tab $tight>Échantillons</Tab>
            <PanelMenu aria-label="Préférences du panneau">
              <MenuIcon />
            </PanelMenu>
          </TabBar>
          <Opacity>
            <label htmlFor="opacity">Opacité:</label>
            <Select id="opacity" width="49px" value="100 %" />
            <Select label="Mode de fusion" width="63px" value="Normal" />
            <Gear />
            <Padlock />
          </Opacity>
          <LayerList />
          <LayerActions>
            <Layers size={12} />
            <Spacer />
            <Icon size={10}>
              <path d="M0 1h14v12H0zM7 3a4 4 0 100 8 4 4 0 000-8z" fillRule="evenodd" />
            </Icon>
            <Icon size={9}>
              <circle cx="7" cy="7" r="6" fill="none" stroke="currentColor" />
              <path d="M11 3L3 11a6 6 0 008-8z" />
            </Icon>
            <em>fx</em>
            <Spacer />
            <Icon size={10} fill="none" stroke="currentColor" strokeWidth="1.500">
              <path d="M2 1h6l4 4v8H2zM8 1v4h4" />
            </Icon>
            <Trash size={10} />
          </LayerActions>
          <Character />
          <Transform />
        </RightDock>
      </Workspace>
      <StatusBar>
        <Icon size={8}>
          <path d="M0 1h2v12H0zM13 1v12L3 7z" />
        </Icon>
        <Icon size={8}>
          <path d="M12 1v12L2 7z" />
        </Icon>
        <StatusGap $width="49px" />
        <Icon size={8}>
          <path d="M2 1v12l10-6z" />
        </Icon>
        <Icon size={8}>
          <path d="M1 1v12l9-6zM12 1h2v12h-2z" />
        </Icon>
        <BlankPage filled />
        <StatusGap $width="2px" />
        <Icon size={9} fill="#8a8a8a">
          <path d="M0 12h14v2H0zM4 12V2h5l2 3v7z" />
        </Icon>
      </StatusBar>
    </Screen>
    <NewDocument />
    <Banner href="#">
      <svg width="38" height="40" viewBox="0 0 38 40" fill="#ffffff">
        <g transform="rotate(-4 19 20)">
          <circle cx="18" cy="4" r="3" />
          <path d="M4 25V17a14 14 0 0128 0v8z" />
          <rect x="0" y="27" width="38" height="7" rx="3" />
          <path d="M18 35h6a3 3 0 01-6 0z" />
        </g>
      </svg>
      <strong>ABONNEZ-VOU</strong>
      <small>S</small>
    </Banner>
    <Pointer width="24" height="24" viewBox="0 0 24 24" aria-hidden="true">
      <circle cx="10" cy="10" r="10" fill="#85852a" />
      <path
        d="M10.500 10v11l2.500-2 1.500 3 1.500-1-1.500-3H18z"
        fill="#ffffff"
        stroke="#333333"
        strokeWidth="0.500"
      />
    </Pointer>
  </>
);

export default App;
